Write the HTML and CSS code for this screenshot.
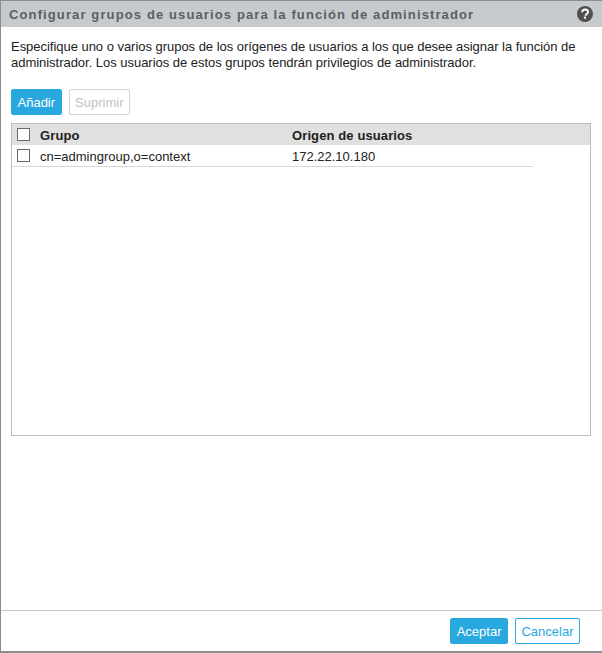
FILE: index.html
```html
<!DOCTYPE html>
<html lang="es">
<head>
<meta charset="utf-8">
<title>Configurar grupos</title>
<link rel="stylesheet" href="styles.css">
</head>
<body>
<div class="dialog">
  <header class="titlebar">
    <h1 class="title">Configurar grupos de usuarios para la función de administrador</h1>
    <svg class="help" width="16" height="16" viewBox="0 0 16 16"><circle cx="8" cy="8" r="8" fill="#505050"/><path d="M5.2 6.2C5.3 4.5 6.5 3.5 8.1 3.5c1.700 0 2.900 1 2.900 2.400 0 1.200-.7 1.800-1.500 2.300-.7.500-.9.800-.9 1.500" fill="none" stroke="#fff" stroke-width="1.900"/><rect x="6.900" y="10.600" width="2.100" height="2.100" fill="#fff"/></svg>
  </header>
  <main class="content">
    <p class="intro">Especifique uno o varios grupos de los orígenes de usuarios a los que desee asignar la función de administrador. Los usuarios de estos grupos tendrán privilegios de administrador.</p>
    <div class="toolbar">
      <button class="btn primary">Añadir</button>
      <button class="btn disabled">Suprimir</button>
    </div>
    <section class="table">
      <div class="row head">
        <span class="check"></span>
        <span class="col-group">Grupo</span>
        <span class="col-origin">Origen de usuarios</span>
      </div>
      <div class="row item">
        <span class="check"></span>
        <span class="col-group">cn=admingroup,o=context</span>
        <span class="col-origin">172.22.10.180</span>
      </div>
    </section>
  </main>
  <footer class="footer">
    <button class="btn primary">Aceptar</button>
    <button class="btn outline">Cancelar</button>
  </footer>
</div>
</body>
</html>
```
FILE: styles.css
```css
* { box-sizing: border-box; }
html, body { margin: 0; height: 100%; }
body { font-family: "Liberation Sans", Arial, sans-serif; font-size: 13px; color: #222; background: #fff; }
.dialog { width: 602px; height: 653px; display: flex; flex-direction: column; border: solid #8c8c8c; border-width: 1px 0 2px 1px; }
.titlebar { height: 26px; flex: none; background: #c6cacd; display: flex; align-items: center; justify-content: space-between; padding: 0 9px 0 8px; }
.title { margin: 0; font-size: 13px; font-weight: bold; letter-spacing: 1.12px; color: #5a5f63; }
.content { flex: 1; padding: 12px 11px 0 10px; display: flex; flex-direction: column; }
.intro { margin: 0; line-height: 16px; height: 32px; letter-spacing: -0.03px; }
.toolbar { display: flex; gap: 7px; margin-top: 18px; }
.btn { font: 13px "Liberation Sans", Arial, sans-serif; height: 26px; padding: 0 5.5px; border-radius: 2px; border: 1px solid; background: #fff; }
.primary { background: #29a8e0; border-color: #29a8e0; color: #fff; }
.disabled { border-color: #d4d4d4; color: #c4c4c4; }
.outline { border-color: #29a8e0; color: #29a8e0; }
.table { margin-top: 8px; height: 313px; border: 1px solid #bcbcbc; }
.row { display: flex; align-items: center; }
.head { height: 21px; background: #e0e0e0; font-weight: bold; letter-spacing: 0.11px; }
.item { height: 22px; width: 521px; border-bottom: 1px solid #d8d8d8; }
.check { width: 13px; height: 13px; margin-left: 5px; border: 1px solid #6a6a6a; background: #fff; flex: none; }
.col-group { margin-left: 10px; width: 252px; padding-top: 1px; }
.col-origin { padding-top: 1px; }
.footer { height: 41px; flex: none; border-top: 1px solid #c8c8c8; display: flex; justify-content: flex-end; align-items: center; gap: 7px; padding-right: 22px; }
```
